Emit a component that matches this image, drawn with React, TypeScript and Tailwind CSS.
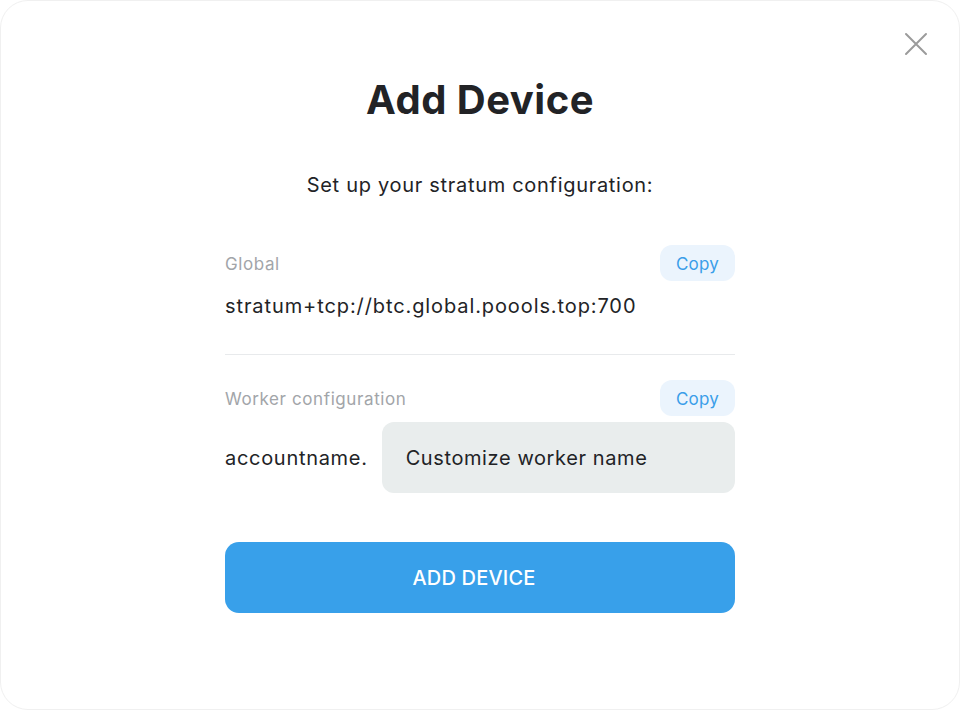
export default function App() {
  return (
    <div className="w-[960px] h-[710px] bg-white font-['Inter','Liberation_Sans',sans-serif] text-[#222326]">
      <div className="relative w-full h-full rounded-[28px] border border-[#f0f0f0] bg-white flex flex-col items-center pt-[75px]">
        {/* close */}
        <button className="absolute top-[31px] right-[31px] w-[24px] h-[24px] flex items-center justify-center">
          <svg width="24" height="24" viewBox="0 0 24 24" fill="none" stroke="#9b9b9b" strokeWidth="2" strokeLinecap="round">
            <path d="M2 2 L22 22 M22 2 L2 22" />
          </svg>
        </button>

        <h1 className="text-[40px] leading-[48px] font-bold tracking-[0.5px]">Add Device</h1>
        <p className="mt-[47px] text-[20px] leading-[28px] tracking-[0.7px]">Set up your stratum configuration:</p>

        <div className="w-[510px] mt-[46px] flex flex-col">
          {/* global */}
          <div className="flex items-center justify-between h-[36px]">
            <span className="text-[17px] tracking-[0.6px] text-[#a2a5a9] pt-[3px]">Global</span>
            <button className="h-[36px] px-[16px] pt-[3px] rounded-[12px] bg-[#ebf4fd] text-[17px] tracking-[0.2px] text-[#3a9ee9]">Copy</button>
          </div>
          <div className="mt-[11px] text-[20px] leading-[28px] tracking-[0.9px]">stratum+tcp://btc.global.poools.top:700</div>
          <div className="mt-[34px] h-px bg-[#e8eaec]" />

          {/* worker */}
          <div className="mt-[25px] flex items-center justify-between h-[36px]">
            <span className="text-[17px] tracking-[0.6px] text-[#a2a5a9] pt-[3px]">Worker configuration</span>
            <button className="h-[36px] px-[16px] pt-[3px] rounded-[12px] bg-[#ebf4fd] text-[17px] tracking-[0.2px] text-[#3a9ee9]">Copy</button>
          </div>
          <div className="mt-[6px] flex items-center gap-[14px]">
            <span className="text-[20px] tracking-[0.7px]">accountname.</span>
            <div className="flex-1 h-[71px] rounded-[12px] bg-[#e9eded] flex items-center px-[24px] text-[20px] tracking-[0.6px]">
              Customize worker name
            </div>
          </div>

          <button className="mt-[49px] h-[71px] pr-[12px] rounded-[14px] bg-[#38a0ea] text-white text-[20px] font-medium tracking-[0.2px]">
            ADD DEVICE
          </button>
        </div>
      </div>
    </div>
  );
}
